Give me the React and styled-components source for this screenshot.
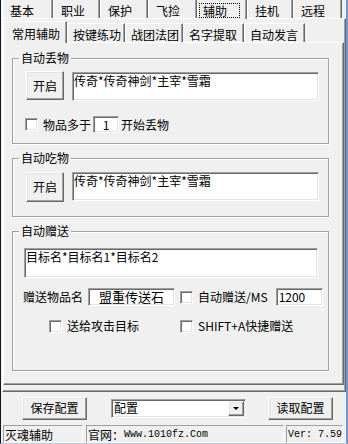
import React from 'react'
import styled, { createGlobalStyle, css } from 'styled-components'

const GlobalStyle = createGlobalStyle`
  html, body {
    margin: 0;
    padding: 0;
    background: #f0f0f0;
  }
  body {
    font-family: "Noto Sans CJK SC", "Liberation Sans", sans-serif;
    font-size: 12px;
    color: #000;
  }
`

const raised = css`
  border-top: 1px solid #ffffff;
  border-left: 1px solid #ffffff;
  border-right: 1px solid #696969;
  border-bottom: 1px solid #696969;
  box-shadow: inset -1px -1px 0 #a0a0a0, inset 1px 1px 0 #e3e3e3;
`

const sunken = css`
  border-top: 1px solid #a0a0a0;
  border-left: 1px solid #a0a0a0;
  border-right: 1px solid #ffffff;
  border-bottom: 1px solid #ffffff;
  box-shadow: inset 1px 1px 0 #696969, inset -1px -1px 0 #e3e3e3;
`

const Window = styled.div`
  width: 348px;
  height: 444px;
  box-sizing: border-box;
  border-left: 1px solid #0e1626;
  border-right: 2px solid #6d96d2;
  border-bottom: 1px solid #b4cbea;
  background: #f0f0f0;
  display: flex;
  flex-direction: column;
  overflow: hidden;
`

const OuterStrip = styled.div`
  display: flex;
  height: 18px;
  padding-left: 1px;
  flex: none;
`

const OuterTab = styled.div`
  position: relative;
  width: ${p => p.w}px;
  height: ${p => (p.active ? 19 : 18)}px;
  box-sizing: border-box;
  border-left: 1px solid #ffffff;
  border-right: 1px solid #696969;
  box-shadow: inset -1px 0 0 #a0a0a0;
  padding: 4px 0 0 ${p => (p.active ? 1 : 7)}px;
  line-height: 14px;
  white-space: nowrap;
  background: #f0f0f0;
  z-index: ${p => (p.active ? 1 : 0)};
`

const Focus = styled.span`
  display: inline-block;
  border: 1px dotted #000;
  padding: 0 12px 0 3px;
  margin-top: -2px;
  line-height: 13px;
`

const OuterPanel = styled.div`
  flex: none;
  height: 374px;
  box-sizing: border-box;
  margin-left: 1px;
  border-top: 1px solid #ffffff;
  border-left: 1px solid #ffffff;
  border-right: 1px solid #696969;
  border-bottom: 1px solid #696969;
  box-shadow: inset -1px -1px 0 #a0a0a0;
  padding: 0 1px 6px 0;
  display: flex;
  flex-direction: column;
`

const InnerStrip = styled.div`
  display: flex;
  align-items: flex-end;
  height: 23px;
  flex: none;
`

const InnerTab = styled.div`
  position: relative;
  width: ${p => p.w}px;
  height: ${p => (p.active ? 22 : 19)}px;
  box-sizing: border-box;
  border-top: 1px solid #ffffff;
  border-left: 1px solid #ffffff;
  border-right: 1px solid #696969;
  box-shadow: inset -1px 0 0 #a0a0a0;
  padding: ${p => (p.active ? '5px 0 0 8px' : '4px 0 0 5px')};
  line-height: 14px;
  white-space: nowrap;
  background: #f0f0f0;
  margin-bottom: ${p => (p.active ? -1 : 0)}px;
  z-index: ${p => (p.active ? 1 : 0)};
`

const InnerPanel = styled.div`
  flex: 1;
  box-sizing: border-box;
  border-top: 1px solid #ffffff;
  border-left: 1px solid #ffffff;
  border-right: 1px solid #696969;
  border-bottom: 1px solid #696969;
  box-shadow: inset -1px -1px 0 #a0a0a0;
  padding: 8px 0 0 8px;
  display: flex;
  flex-direction: column;
  gap: 7px;
`

const Group = styled.fieldset`
  margin: 0;
  padding: 0;
  width: 317px;
  box-sizing: border-box;
  min-width: 0;
  border: 1px solid #a0a0a0;
  box-shadow: inset 1px 1px 0 #ffffff, 1px 1px 0 #ffffff;
`

const Legend = styled.legend`
  margin-left: 6px;
  padding: 0 2px;
  line-height: 14px;
  background: #f0f0f0;
`

const Body = styled.div`
  padding: ${p => p.top}px 0 ${p => p.bottom}px ${p => p.left}px;
  display: flex;
  flex-direction: column;
`

const Row = styled.div`
  display: flex;
  align-items: ${p => p.align || 'center'};
  margin-top: ${p => p.mt || 0}px;
  margin-left: ${p => p.ml || 0}px;
  gap: ${p => (p.gap == null ? 5 : p.gap)}px;
`

const Button = styled.div`
  ${raised};
  width: ${p => p.w}px;
  height: ${p => p.h}px;
  box-sizing: border-box;
  background: #f0f0f0;
  display: flex;
  align-items: center;
  justify-content: center;
  line-height: 14px;
  flex: none;
`

const EditBox = styled.div`
  ${sunken};
  width: ${p => p.w}px;
  height: ${p => p.h}px;
  box-sizing: border-box;
  background: #ffffff;
  padding: 1px 1px;
  margin-top: ${p => p.mt || 0}px;
  line-height: 14px;
  white-space: nowrap;
  overflow: hidden;
  flex: none;
`

const Field = styled.div`
  ${sunken};
  width: ${p => p.w}px;
  height: ${p => p.h}px;
  box-sizing: border-box;
  background: #ffffff;
  display: flex;
  align-items: center;
  justify-content: ${p => (p.center ? 'center' : 'flex-start')};
  padding: 0 2px;
  line-height: 14px;
  white-space: nowrap;
  flex: none;
  font-size: ${p => p.fs || 12}px;
`

const Check = styled.span`
  ${sunken};
  display: inline-block;
  width: 13px;
  height: 13px;
  box-sizing: border-box;
  background: #ffffff;
  flex: none;
`

const Label = styled.span`
  line-height: 14px;
  white-space: nowrap;
`

const CheckCell = styled.div`
  display: flex;
  align-items: center;
  gap: 5px;
  width: ${p => p.w || 'auto'};
  flex: none;
`

const BottomBar = styled.div`
  flex: none;
  height: 32px;
  display: flex;
  align-items: center;
  padding-left: 21px;
`

const Combo = styled.div`
  ${sunken};
  width: 135px;
  height: 19px;
  box-sizing: border-box;
  background: #ffffff;
  margin: 0 22px 0 24px;
  display: flex;
  align-items: center;
  justify-content: space-between;
  padding: 0 1px 0 2px;
  line-height: 14px;
`

const DropButton = styled.span`
  ${raised};
  width: 16px;
  height: 15px;
  box-sizing: border-box;
  background: #f0f0f0;
  display: flex;
  align-items: center;
  justify-content: center;
  &::after {
    content: '';
    border-left: 3px solid transparent;
    border-right: 3px solid transparent;
    border-top: 3px solid #000;
    margin-top: 1px;
  }
`

const StatusBar = styled.div`
  flex: none;
  height: 19px;
  display: flex;
  padding: 1px 0 0 2px;
  box-sizing: border-box;
  gap: 3px;
`

const StatusPanel = styled.div`
  width: ${p => p.w}px;
  height: 18px;
  box-sizing: border-box;
  border-top: 1px solid #a0a0a0;
  border-left: 1px solid #a0a0a0;
  border-bottom: 1px solid #ffffff;
  border-right: 1px solid #ffffff;
  padding: 1px 0 0 1px;
  line-height: 14px;
  white-space: nowrap;
  display: flex;
  align-items: center;
  margin-right: ${p => p.mr || 0}px;
`

const Mono = styled.span`
  font-family: "Liberation Mono", "DejaVu Sans Mono", monospace;
  font-size: 10px;
`

const outerTabs = [
  { t: '基本', w: 51 },
  { t: '职业', w: 47 },
  { t: '保护', w: 48 },
  { t: '飞捡', w: 49 },
  { t: '辅助', w: 50, active: true },
  { t: '挂机', w: 46 },
  { t: '远程', w: 49 },
]

const innerTabs = [
  { t: '常用辅助', w: 64, active: true },
  { t: '按键练功', w: 58 },
  { t: '战团法团', w: 58 },
  { t: '名字提取', w: 61 },
  { t: '自动发言', w: 61 },
]

export default function App() {
  return (
    <>
      <GlobalStyle />
      <Window>
        <OuterStrip>
          {outerTabs.map(tab => (
            <OuterTab key={tab.t} w={tab.w} active={tab.active}>
              {tab.active ? <Focus>{tab.t}</Focus> : tab.t}
            </OuterTab>
          ))}
        </OuterStrip>
        <OuterPanel>
          <InnerStrip>
            {innerTabs.map(tab => (
              <InnerTab key={tab.t} w={tab.w} active={tab.active}>
                {tab.t}
              </InnerTab>
            ))}
          </InnerStrip>
          <InnerPanel>
            <Group>
              <Legend>自动丢物</Legend>
              <Body top={6} bottom={10} left={13}>
                <Row align="flex-start" gap={8}>
                  <Button w={38} h={29}>开启</Button>
                  <EditBox w={247} h={29} mt={1}>传奇*传奇神剑*主宰*雪霜</EditBox>
                </Row>
                <Row mt={15} ml={-1} gap={0}>
                  <Check />
                  <Label style={{ marginLeft: 5 }}>物品多于</Label>
                  <Field w={26} h={17} center style={{ margin: '0 2px' }}>1</Field>
                  <Label>开始丢物</Label>
                </Row>
              </Body>
            </Group>
            <Group>
              <Legend>自动吃物</Legend>
              <Body top={7} bottom={14} left={13}>
                <Row align="flex-start" gap={8}>
                  <Button w={38} h={30}>开启</Button>
                  <EditBox w={247} h={29}>传奇*传奇神剑*主宰*雪霜</EditBox>
                </Row>
              </Body>
            </Group>
            <Group>
              <Legend>自动赠送</Legend>
              <Body top={10} bottom={37} left={11}>
                <EditBox w={294} h={30}>目标名*目标名1*目标名2</EditBox>
                <Row mt={10} ml={-1} gap={5}>
                  <Label>赠送物品名</Label>
                  <Field w={87} h={18} center fs={13}>盟重传送石</Field>
                  <CheckCell>
                    <Check />
                    <Label>自动赠送/MS</Label>
                  </CheckCell>
                  <Field w={47} h={18} style={{ marginLeft: 3 }}>1200</Field>
                </Row>
                <Row mt={13} ml={25} gap={0}>
                  <CheckCell w="131px">
                    <Check />
                    <Label>送给攻击目标</Label>
                  </CheckCell>
                  <CheckCell>
                    <Check />
                    <Label>SHIFT+A快捷赠送</Label>
                  </CheckCell>
                </Row>
              </Body>
            </Group>
          </InnerPanel>
        </OuterPanel>
        <BottomBar>
          <Button w={65} h={23}>保存配置</Button>
          <Combo>
            <span>配置</span>
            <DropButton />
          </Combo>
          <Button w={65} h={23}>读取配置</Button>
        </BottomBar>
        <StatusBar>
          <StatusPanel w={80}>灭魂辅助</StatusPanel>
          <StatusPanel w={198} mr={-1}>
            官网：<Mono>Www.1010fz.Com</Mono>
          </StatusPanel>
          <StatusPanel w={57}>
            <Mono>Ver: 7.59</Mono>
          </StatusPanel>
        </StatusBar>
      </Window>
    </>
  )
}
